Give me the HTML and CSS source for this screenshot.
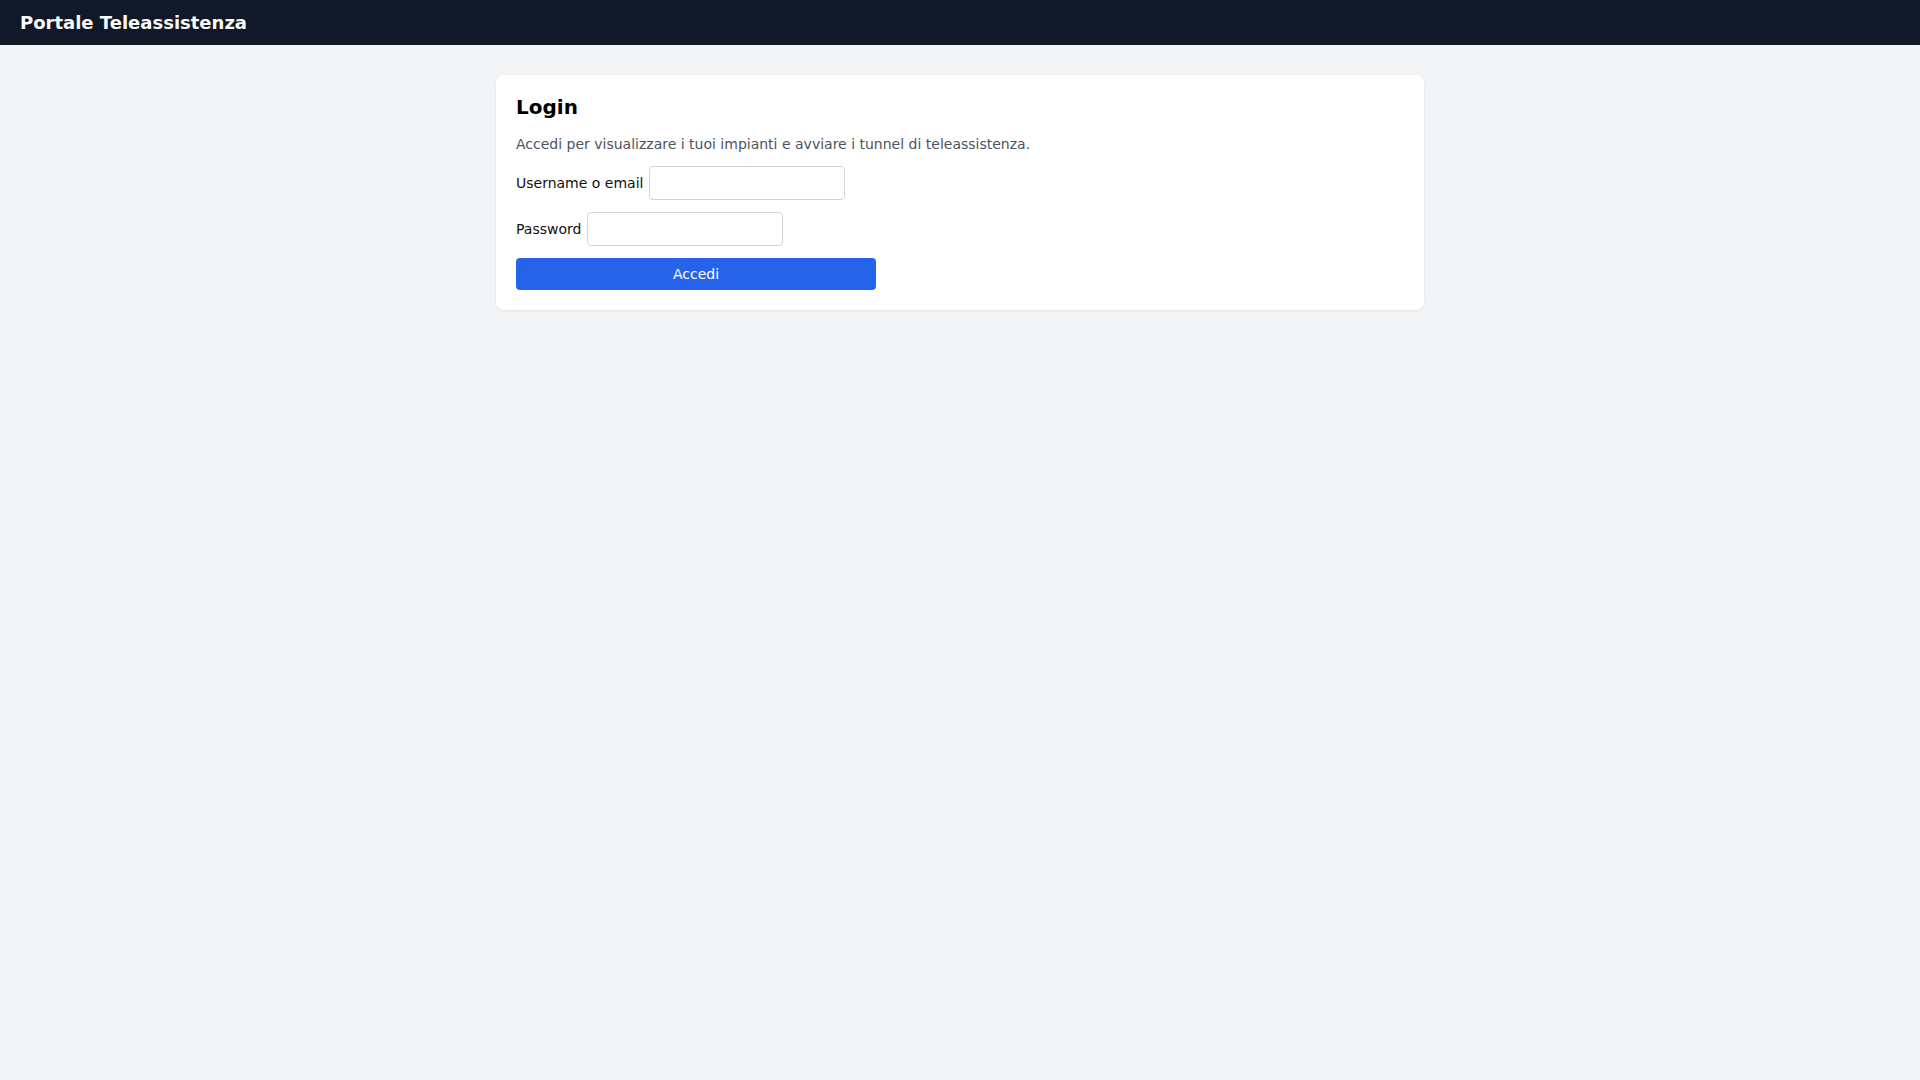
FILE: index.html
```html
<!DOCTYPE html>
<html lang="it">
<head>
  <meta charset="UTF-8" />
  <meta name="viewport" content="width=device-width, initial-scale=1.0"/>
  <title>Portale Teleassistenza</title>
  <link rel="stylesheet" href="styles.css">
</head>
<body>
  <header class="topbar">
    <div class="brand">Portale Teleassistenza</div>
  </header>

  <main class="container">
    <div class="card">
      <h2>Login</h2>
      <p class="hint">Accedi per visualizzare i tuoi impianti e avviare i tunnel di teleassistenza.</p>
      <form class="login-form" onsubmit="return false;">
        <div class="row">
          <label for="username">Username o email</label>
          <input type="text" id="username" name="username">
        </div>
        <div class="row">
          <label for="password">Password</label>
          <input type="password" id="password" name="password">
        </div>
        <button type="submit">Accedi</button>
      </form>
    </div>
  </main>
</body>
</html>
```

FILE: styles.css
```css
* {
  margin: 0;
  padding: 0;
  box-sizing: border-box;
}

body {
  font-family: "DejaVu Sans", sans-serif;
  font-size: 14px;
  background-color: #f3f4f6;
  color: #111;
  min-height: 100vh;
}

.topbar {
  background-color: #111827;
  height: 45px;
  display: flex;
  align-items: center;
  padding: 0 20px;
}

.brand {
  color: #f9fafb;
  font-size: 18px;
  font-weight: 700;
}

.container {
  max-width: 960px;
  margin: 30px auto 0;
  padding: 0 16px;
}

.card {
  background: #fff;
  border-radius: 8px;
  padding: 20px;
  box-shadow: 0 1px 3px rgba(0, 0, 0, 0.08);
}

.card h2 {
  font-size: 20px;
  font-weight: 700;
  line-height: 24px;
  color: #000;
  margin-bottom: 17px;
}

.hint {
  color: #4b5563;
  margin-bottom: 14px;
}

.login-form {
  display: flex;
  flex-direction: column;
  gap: 12px;
}

.row {
  display: flex;
  align-items: center;
  gap: 6px;
}

.row label {
  color: #111;
}

.row input {
  width: 196px;
  height: 34px;
  border: 1px solid #d1d5db;
  border-radius: 4px;
  padding: 0 8px;
  font-family: inherit;
  font-size: 14px;
  background: #fff;
}

button {
  width: 360px;
  height: 32px;
  border: none;
  border-radius: 4px;
  background-color: #2563eb;
  color: #fff;
  font-family: inherit;
  font-size: 14px;
  cursor: pointer;
}
```
